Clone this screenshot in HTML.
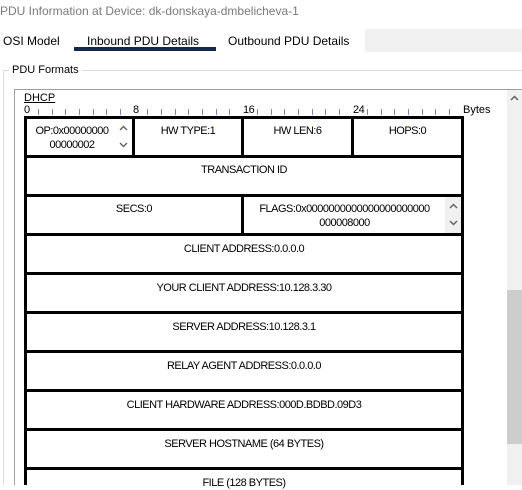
<!DOCTYPE html>
<html><head><style>
*{margin:0;padding:0;box-sizing:border-box}
body{width:522px;height:485px;overflow:hidden;background:#fff;font-family:"Liberation Sans",Arial,sans-serif;position:relative}
.a{position:absolute}
.t{font-size:11px;color:#000;text-align:center;letter-spacing:-0.5px}
.cell{position:absolute;background:#fff}
.tick{position:absolute;top:109px;width:1px;height:6px;background:#6b8fc0}
.sp{position:absolute;background:#f0f0f0}
.sp svg{position:absolute;left:4px}
</style></head><body>
<div class="a" style="left:0;top:4px;font-size:12px;color:#7a7a7a">PDU Information at Device: dk-donskaya-dmbelicheva-1</div>
<div class="a" style="left:365px;top:29px;width:157px;height:23px;background:#f0f0f0"></div>
<div class="a" style="left:3px;top:34px;font-size:12px">OSI Model</div>
<div class="a" style="left:87px;top:34px;font-size:12px">Inbound PDU Details</div>
<div class="a" style="left:74px;top:47px;width:142px;height:4px;background:#14294a"></div>
<div class="a" style="left:228px;top:34px;font-size:12px">Outbound PDU Details</div>
<div class="a" style="left:3px;top:70px;width:519px;height:1px;background:#dcdcdc"></div>
<div class="a" style="left:3px;top:70px;width:1px;height:415px;background:#dcdcdc"></div>
<div class="a" style="left:9px;top:64px;font-size:11px;background:#fff;padding:0 3px">PDU Formats</div>
<div class="a" style="left:14px;top:89px;width:508px;height:1px;background:#a0a0a0"></div>
<div class="a" style="left:14px;top:89px;width:1px;height:396px;background:#a0a0a0"></div>
<div class="a" style="left:507px;top:90px;width:15px;height:395px;background:#f0f0f0"></div>
<div class="a" style="left:507px;top:290px;width:15px;height:154px;background:#cdcdcd"></div>
<svg class="a" style="left:510px;top:95px" width="9" height="6"><path d="M1 5L4.5 1.5L8 5" stroke="#606060" stroke-width="1.5" fill="none"/></svg>
<div class="a" style="left:24px;top:92px;font-size:11px;text-decoration:underline">DHCP</div>
<div class="a t" style="left:24px;top:104px;text-align:left">0</div>
<div class="a t" style="left:133px;top:104px;text-align:left">8</div>
<div class="a t" style="left:243px;top:104px;text-align:left">16</div>
<div class="a t" style="left:353px;top:104px;text-align:left">24</div>
<div class="a t" style="left:463px;top:104px;text-align:left;letter-spacing:0">Bytes</div>
<div class="tick" style="left:38px"></div><div class="tick" style="left:52px"></div><div class="tick" style="left:65px"></div><div class="tick" style="left:79px"></div><div class="tick" style="left:93px"></div><div class="tick" style="left:106px"></div><div class="tick" style="left:120px"></div>
<div class="tick" style="left:147px"></div><div class="tick" style="left:161px"></div><div class="tick" style="left:175px"></div><div class="tick" style="left:188px"></div><div class="tick" style="left:202px"></div><div class="tick" style="left:216px"></div><div class="tick" style="left:229px"></div>
<div class="tick" style="left:257px"></div><div class="tick" style="left:271px"></div><div class="tick" style="left:284px"></div><div class="tick" style="left:298px"></div><div class="tick" style="left:312px"></div><div class="tick" style="left:325px"></div><div class="tick" style="left:339px"></div>
<div class="tick" style="left:367px"></div><div class="tick" style="left:381px"></div><div class="tick" style="left:394px"></div><div class="tick" style="left:408px"></div><div class="tick" style="left:422px"></div><div class="tick" style="left:435px"></div><div class="tick" style="left:449px"></div>
<div class="a" style="left:24px;top:116px;width:440px;height:369px;background:#000"></div>
<div class="cell" style="left:27px;top:119px;width:105px;height:36px"><div class="t" style="width:90px;margin-top:5px;line-height:14px">OP:0x00000000<br>00000002</div></div>
<div class="sp" style="left:115px;top:120px;width:16px;height:34px;background:#fff"><svg style="top:5px" width="9" height="6"><path d="M1 5L4.5 1.5L8 5" stroke="#606060" stroke-width="1.4" fill="none"/></svg><svg style="top:22px" width="9" height="6"><path d="M1 1L4.5 4.5L8 1" stroke="#606060" stroke-width="1.4" fill="none"/></svg></div>
<div class="cell t" style="left:135px;top:119px;width:106px;height:36px;padding-top:6px">HW TYPE:1</div>
<div class="cell t" style="left:244px;top:119px;width:107px;height:36px;padding-top:6px">HW LEN:6</div>
<div class="cell t" style="left:354px;top:119px;width:107px;height:36px;padding-top:6px">HOPS:0</div>
<div class="cell t" style="left:27px;top:158px;width:434px;height:36px;padding-top:6px">TRANSACTION ID</div>
<div class="cell t" style="left:27px;top:197px;width:214px;height:36px;padding-top:6px">SECS:0</div>
<div class="cell" style="left:244px;top:197px;width:217px;height:36px"><div class="t" style="width:201px;margin-top:5px;line-height:14px">FLAGS:0x0000000000000000000000<br>000008000</div></div>
<div class="sp" style="left:445px;top:197px;width:16px;height:36px"><svg style="top:6px" width="9" height="6"><path d="M1 5L4.5 1.5L8 5" stroke="#606060" stroke-width="1.4" fill="none"/></svg><svg style="top:23px" width="9" height="6"><path d="M1 1L4.5 4.5L8 1" stroke="#606060" stroke-width="1.4" fill="none"/></svg></div>
<div class="cell t" style="left:27px;top:236px;width:434px;height:36px;padding-top:7px">CLIENT ADDRESS:0.0.0.0</div>
<div class="cell t" style="left:27px;top:275px;width:434px;height:36px;padding-top:7px">YOUR CLIENT ADDRESS:10.128.3.30</div>
<div class="cell t" style="left:27px;top:314px;width:434px;height:36px;padding-top:7px">SERVER ADDRESS:10.128.3.1</div>
<div class="cell t" style="left:27px;top:353px;width:434px;height:36px;padding-top:7px">RELAY AGENT ADDRESS:0.0.0.0</div>
<div class="cell t" style="left:27px;top:392px;width:434px;height:36px;padding-top:7px">CLIENT HARDWARE ADDRESS:000D.BDBD.09D3</div>
<div class="cell t" style="left:27px;top:431px;width:434px;height:36px;padding-top:7px">SERVER HOSTNAME (64 BYTES)</div>
<div class="cell t" style="left:27px;top:470px;width:434px;height:20px;padding-top:7px">FILE (128 BYTES)</div>
</body></html>
